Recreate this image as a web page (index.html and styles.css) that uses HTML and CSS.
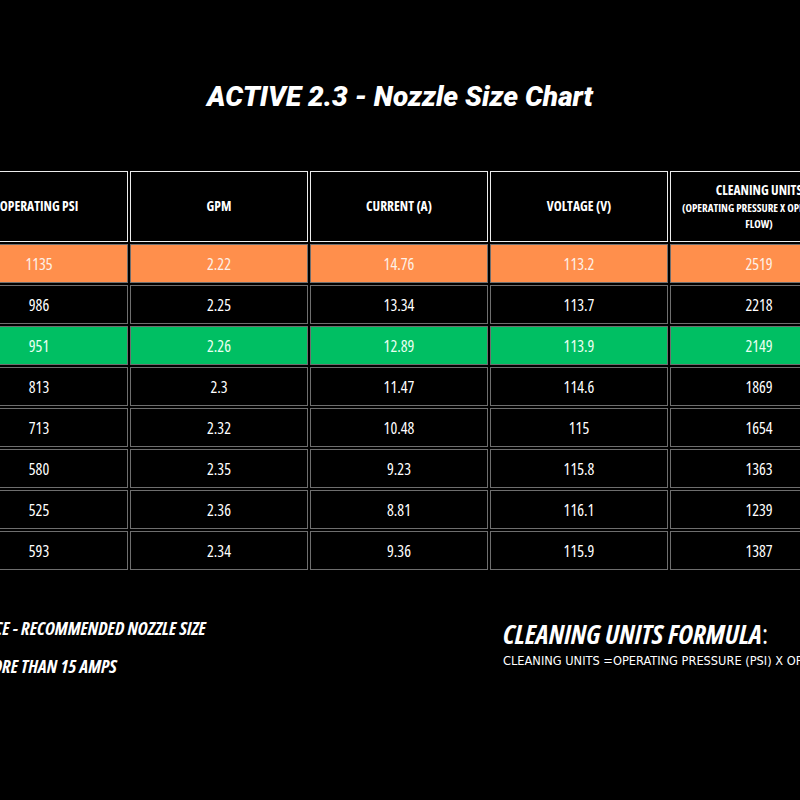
FILE: index.html
```html
<!DOCTYPE html>
<html>
<head>
<meta charset="utf-8">
<link rel="stylesheet" href="styles.css">
</head>
<body>
<div class="page">
  <h1 class="title">ACTIVE 2.3 - Nozzle Size Chart</h1>
  <table class="chart">
    <thead>
      <tr class="head-row">
        <th>OPERATING PSI</th>
        <th>GPM</th>
        <th>CURRENT (A)</th>
        <th>VOLTAGE (V)</th>
        <th>CLEANING UNITS<span class="sub">(OPERATING PRESSURE X OPERATING FLOW)</span></th>
      </tr>
    </thead>
    <tbody>
      <tr class="orange"><td>1135</td><td>2.22</td><td>14.76</td><td>113.2</td><td>2519</td></tr>
      <tr><td>986</td><td>2.25</td><td>13.34</td><td>113.7</td><td>2218</td></tr>
      <tr class="green"><td>951</td><td>2.26</td><td>12.89</td><td>113.9</td><td>2149</td></tr>
      <tr><td>813</td><td>2.3</td><td>11.47</td><td>114.6</td><td>1869</td></tr>
      <tr><td>713</td><td>2.32</td><td>10.48</td><td>115</td><td>1654</td></tr>
      <tr><td>580</td><td>2.35</td><td>9.23</td><td>115.8</td><td>1363</td></tr>
      <tr><td>525</td><td>2.36</td><td>8.81</td><td>116.1</td><td>1239</td></tr>
      <tr><td>593</td><td>2.34</td><td>9.36</td><td>115.9</td><td>1387</td></tr>
    </tbody>
  </table>
  <div class="footer">
    <div class="legend">
      <p class="legend-line">GREEN - BEST PERFORMANCE - RECOMMENDED NOZZLE SIZE</p>
      <p class="legend-line">ORANGE - MORE THAN 15 AMPS</p>
    </div>
    <div class="formula">
      <p class="formula-title">CLEANING UNITS FORMULA<span class="colon">:</span></p>
      <p class="formula-text">CLEANING UNITS =OPERATING PRESSURE (PSI) X OPERATING FLOW (GPM)</p>
    </div>
  </div>
</div>
</body>
</html>
```

FILE: styles.css
```css
html, body {
  margin: 0;
  padding: 0;
  background: #000;
}
body {
  width: 800px;
  height: 800px;
  overflow: hidden;
  color: #fff;
  font-family: "Open Sans", "DejaVu Sans Condensed", sans-serif;
  font-stretch: 75%;
}
.page {
  width: 800px;
  height: 800px;
  overflow: hidden;
}
.title {
  margin: 0;
  padding-top: 78px;
  height: 38px;
  line-height: 38px;
  text-align: center;
  font-family: "Roboto", "Inter", sans-serif;
  font-weight: 900;
  font-style: italic;
  font-size: 28px;
  letter-spacing: 0;
  font-stretch: normal;
}
.chart {
  margin-top: 53px;
  margin-left: -52px;
  width: 902px;
  table-layout: fixed;
  border-collapse: separate;
  border-spacing: 2px;
  text-align: center;
}
.chart th {
  height: 69px;
  padding: 0;
  border: 1px solid #ececec;
  font-size: 13.5px;
  font-weight: bold;
  line-height: 17px;
  vertical-align: middle;
}
.chart th .sub {
  display: block;
  font-size: 11px;
  line-height: 16px;
  padding: 1px 4px 0;
}
.chart td {
  height: 37px;
  padding: 0;
  border: 1px solid #6e6e6e;
  font-size: 16px;
  vertical-align: middle;
}
.chart tr.orange td {
  background: #ff8f4c;
  color: #fdf1e8;
}
.chart tr.green td {
  background: #00bf63;
  color: #eafff2;
}
.footer {
  display: flex;
  margin-top: 46px;
}
.legend {
  width: 400px;
  flex: none;
  margin-left: -185px;
  margin-right: 288px;
  text-align: center;
}
.legend-line {
  margin: 0 0 18px;
  white-space: nowrap;
  font-size: 18.5px;
  line-height: 20px;
  font-weight: bold;
  font-style: italic;
}
.formula {
  flex: none;
  white-space: nowrap;
  padding-top: 3px;
}
.formula-title {
  margin: 0;
  font-size: 27.5px;
  line-height: 26px;
  font-weight: bold;
  font-style: italic;
}
.formula-title .colon {
  font-style: normal;
  font-weight: normal;
}
.formula-text {
  margin: 6px 0 0;
  font-family: "DejaVu Sans Condensed", "DejaVu Sans", sans-serif;
  font-stretch: condensed;
  font-size: 12.7px;
  line-height: 16px;
}
```
